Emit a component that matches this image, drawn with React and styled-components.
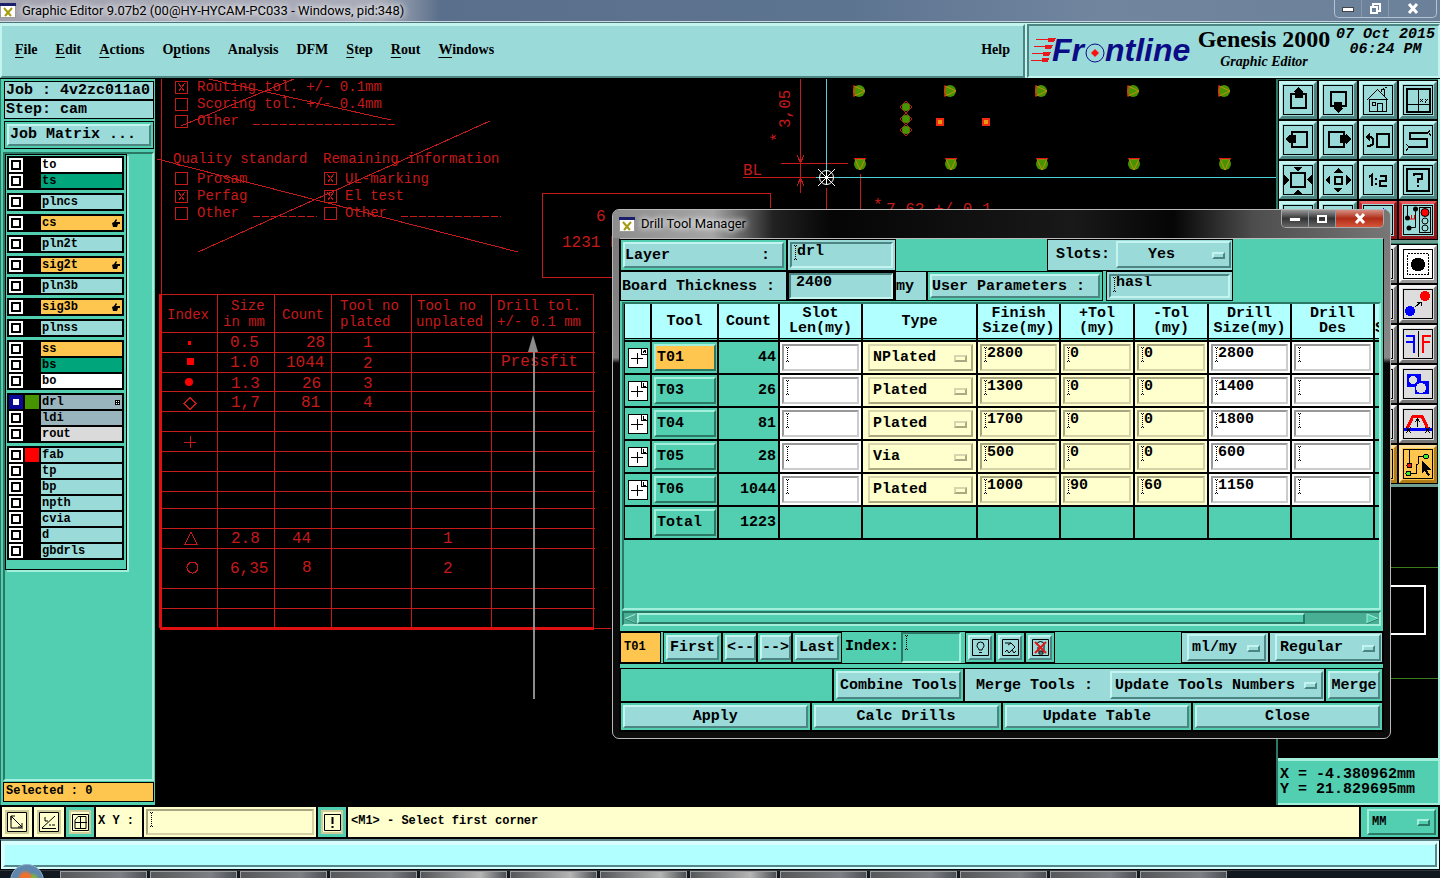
import styled, { createGlobalStyle, css } from 'styled-components';

const aqua = '#9adbda';
const teal = '#52cfb0';
const cream = '#feffcc';
const orange = '#ffc64f';
const mono = '"Liberation Mono", monospace';

const GlobalStyle = createGlobalStyle`
    *, *::before, *::after {
        box-sizing: border-box;
    }
    body {
        margin: 0;
        background: #000;
        color: #000;
        font: bold 15px ${mono};
    }
    button, input, select {
        font: inherit;
        color: inherit;
        margin: 0;
        border-radius: 0;
        outline: none;
    }
`

const raised = css`
    border: 2px solid;
    border-color: #c4f4f0 #4d8583 #4d8583 #c4f4f0;
`

const sunken = css`
    border: 2px solid;
    border-color: #4d8583 #c4f4f0 #c4f4f0 #4d8583;
`

const tealRaised = css`
    border: 2px solid;
    border-color: #a3efdc #2b7965 #2b7965 #a3efdc;
`

const tealSunken = css`
    border: 2px solid;
    border-color: #2b7965 #a3efdc #a3efdc #2b7965;
`

const Screen = styled.div`
    position: relative;
    display: flex;
    flex-direction: column;
    height: 100vh;
    min-height: 800px;
    overflow: hidden;
`

/* main window title */
const TitleBar = styled.header`
    display: flex;
    justify-content: space-between;
    align-items: center;
    height: 22px;
    padding: 0 3px 0 0;
    background: linear-gradient(90deg, #a3a3b0 0, #a9adb9 380px, #5a6f8b 440px, #5d7490 850px, #71859f 1100px, #6b8099 100%);
    border-bottom: 1px solid #c9d6df;
    font: 13px Roboto, sans-serif;
`

const TitleText = styled.div`
    display: flex;
    align-items: center;
    gap: 6px;
    text-shadow: 0 0 6px #fff, 0 0 6px #fff;
`

const WindowButtons = styled.div`
    display: flex;
    align-self: flex-start;
    height: 18px;
    border: 1px solid ${({ $dark }) => ($dark ? '#a9a9a9' : '#b5c3d2')};
    border-top: 0;
    border-radius: 0 0 5px 5px;
    overflow: hidden;
`

const WindowButton = styled.button`
    width: ${({ $wide }) => ($wide ? 47 : 27)}px;
    padding: 0;
    border: 0;
    border-right: 1px solid #8b99a8;
    display: flex;
    align-items: center;
    justify-content: center;
    background: ${({ $bg }) => $bg || 'transparent'};
    &:last-child {
        border-right: 0;
    }
`

/* menu + brand */
const Header = styled.div`
    display: flex;
    height: 56px;
    padding: 1px 0 0;
    gap: 2px;
    background: #c4f4f0;
    border-top: 1px solid #4f7478;
`

const MenuBar = styled.nav`
    flex: 1;
    display: flex;
    align-items: center;
    gap: 18px;
    padding: 0 13px 2px;
    background: ${aqua};
    ${raised}
    font: bold 14px "Liberation Serif", serif;
`

const MenuItem = styled.button`
    padding: 0;
    border: 0;
    background: none;
    &:last-child {
        margin-left: auto;
    }
    u {
        text-underline-offset: 3px;
    }
`

const Brand = styled.div`
    display: flex;
    width: 413px;
    padding-left: 2px;
    background: ${aqua};
    ${sunken}
`

const Product = styled.div`
    width: 138px;
    text-align: center;
    font: italic bold 14px/20px "Liberation Serif", serif;
    h1 {
        margin: 0;
        font: bold 24px/26px "Liberation Serif", serif;
        white-space: nowrap;
    }
`

const Clock = styled.div`
    flex: 1;
    padding-top: 1px;
    font: italic bold 15px/15px ${mono};
    text-align: center;
    white-space: nowrap;
`

const Main = styled.main`
    flex: 1;
    display: flex;
    min-height: 0;
    border-top: 1px solid #000;
`

/* left panel */
const Sidebar = styled.aside`
    display: flex;
    flex-direction: column;
    width: 155px;
    padding: 2px 1px 3px 2px;
    background: ${teal};
    border-left: 1px solid #2b7965;
`

const JobLine = styled.div`
    height: 19px;
    margin: 0 0 0 1px;
    padding-left: 1px;
    line-height: 17px;
    background: ${aqua};
    border: 1px solid #000;
    white-space: nowrap;
    overflow: hidden;
`

const ButtonWell = styled.div`
    margin: 2px 0 3px 1px;
    padding: 2px;
    border: 1px solid #000;
`

const MatrixButton = styled.button`
    display: block;
    width: 100%;
    height: 22px;
    padding: 0 1px;
    text-align: left;
    line-height: 16px;
    background: ${aqua};
    ${raised}
`

const LayerArea = styled.div`
    flex: 1;
    border: 2px solid;
    border-color: #2b7965 #a3efdc #a3efdc #2b7965;
`

const LayerPanel = styled.div`
    display: flex;
    flex-direction: column;
    gap: 3px;
    width: 122px;
    padding: 1px 1px 9px;
    border: 1px solid #000;
    box-shadow: 2px 2px 0 #a3efdc;
`

const LayerGroup = styled.div`
    display: flex;
    flex-direction: column;
    gap: 2px;
    width: 117px;
    padding: 2px;
    background: #000;
`

const LayerRow = styled.label`
    display: flex;
    gap: 2px;
    height: 14px;
    font-size: 12px;
    line-height: 13px;
`

const LayerCheck = styled.input`
    appearance: none;
    width: 14px;
    height: 14px;
    background: #000;
    border: 2px solid ${({ $active }) => ($active ? '#0a0a96' : '#fff')};
    box-shadow: inset 0 0 0 2px ${({ $active }) => ($active ? '#0a0a96' : '#000')}, inset 0 0 0 8px #fff;
`

const Swatch = styled.span`
    width: 14px;
    background: ${({ $color }) => $color || '#000'};
`

const LayerName = styled.span`
    flex: 1;
    display: flex;
    justify-content: space-between;
    align-items: center;
    padding: 0 2px 0 1px;
    background: ${({ $color }) => $color};
`

const Selected = styled.div`
    height: 20px;
    margin: 1px 0 0;
    padding-left: 2px;
    background: ${orange};
    border: 1px solid #000;
    font-size: 12px;
    line-height: 17px;
`

const Canvas = styled.div`
    flex: 1;
    min-width: 0;
    background: #000;
    svg {
        display: block;
        width: 100%;
        height: 100%;
    }
`

/* right panel */
const Tools = styled.aside`
    display: flex;
    flex-direction: column;
    width: 164px;
    border-left: 2px solid #2b7965;
    border-right: 2px solid #a3efdc;
`

const ToolGrid = styled.div`
    display: grid;
    grid-template-columns: repeat(4, 38px);
    gap: 2px;
    padding: 1px;
    border-top: 1px solid #2b7965;
    border-bottom: 3px solid #6f9e93;
`

const ToolButton = styled.button`
    display: flex;
    align-items: center;
    justify-content: center;
    height: 38px;
    padding: 0;
    background: ${({ $bg }) => $bg || aqua};
    border: 3px solid;
    border-color: ${({ $edge }) => $edge || '#c4f4f0 #4d8583 #4d8583 #c4f4f0'};
`

const Overview = styled.div`
    flex: 1;
    svg {
        display: block;
        width: 100%;
        height: 100%;
    }
`

const Coordinates = styled.output`
    display: block;
    height: 47px;
    padding: 6px 2px;
    background: ${teal};
    border-top: 3px solid #a3efdc;
    border-bottom: 2px solid #a3efdc;
    line-height: 15px;
    white-space: pre;
`

/* bottom bars */
const StatusBar = styled.div`
    display: flex;
    height: 34px;
    padding: 2px;
    gap: 2px;
    background: #000;
    font-size: 12px;
`

const StatusButton = styled.button`
    width: ${({ $framed }) => ($framed ? 28 : 30)}px;
    display: flex;
    align-items: center;
    justify-content: center;
    padding: 0;
    background: ${cream};
    border: ${({ $framed }) => ($framed ? `3px solid ${teal}` : `3px solid ${cream}`)};
    box-shadow: inset 0 0 0 2px #cfcd9c;
`

const XyLabel = styled.label`
    width: 46px;
    padding-left: 2px;
    background: ${cream};
    line-height: 29px;
`

const XyField = styled.div`
    position: relative;
    width: 172px;
    padding: 2px;
    background: ${cream};
`

const Message = styled.div`
    flex: 1;
    padding-left: 3px;
    background: ${cream};
    line-height: 29px;
`

const UnitCell = styled.div`
    width: 77px;
    padding: 2px 2px 2px 6px;
    background: ${teal};
`

const PromptBar = styled.div`
    height: 31px;
    padding: 2px;
    background: #d8ffff;
    border: 1px solid #000;
    border-top: 2px solid #5e8587;
    div {
        height: 100%;
        background: #b2ffff;
        border: 2px solid;
        border-color: #d8ffff #558788 #558788 #d8ffff;
    }
`

const Taskbar = styled.footer`
    position: relative;
    display: flex;
    gap: 3px;
    height: 8px;
    padding-left: 60px;
    background: #12181f;
    border-top: 1px solid #33383f;
`

const Task = styled.div`
    width: 87px;
    border: 1px solid #a0a0a0;
    border-bottom: 0;
    background: linear-gradient(90deg, #55575a, ${({ $lit }) => ($lit ? '#b5b5b5' : '#7c7f83')} 70%, #4c4f53);
`

const StartOrb = styled.button`
    position: absolute;
    left: 10px;
    top: -7px;
    width: 34px;
    height: 34px;
    border: 1px solid #8fb0c8;
    border-radius: 50%;
    background: radial-gradient(circle at 45% 40%, #f0702c 0 4px, transparent 8px), radial-gradient(circle at 68% 45%, #7fb63c 0 3px, transparent 7px), #5f87ad;
`

/* drill tool manager window */
const Dialog = styled.section`
    position: absolute;
    left: 612px;
    top: 209px;
    width: 779px;
    padding: 0 6px 6px;
    border: 1px solid #b9b9b9;
    border-radius: 7px;
    background: linear-gradient(180deg, #777 0, #888 28%, #080808 29%, #0c0c0c 100%);
`

const DialogTitle = styled.div`
    display: flex;
    justify-content: space-between;
    height: 28px;
    margin: 0 -6px;
    padding: 0 6px;
    border-radius: 6px 6px 0 0;
    background: linear-gradient(90deg, #8d8d8d 0, #a6a6a6 100px, #222 160px, #050505 220px, #191919 460px, #050505 560px, #4d4d4d 640px, #777 100%);
    font: 13px/26px Roboto, sans-serif;
`

const Client = styled.div`
    background: ${teal};
    border: 1px solid #000;
    border-top-color: #bbb;
`

const FormRow = styled.div`
    display: flex;
    height: ${({ $h }) => $h || 32}px;
`

const Cell = styled.div`
    position: relative;
    display: flex;
    align-items: center;
    gap: ${({ $gap }) => $gap || 0}px;
    width: ${({ $w }) => ($w ? `${$w}px` : 'auto')};
    flex: ${({ $grow }) => ($grow ? 1 : 'none')};
    padding: ${({ $pad }) => $pad || '2px'};
    background: ${({ $bg }) => $bg || teal};
    border: 1px solid #000;
    white-space: nowrap;
`

const Spacer = styled.div`
    flex: ${({ $w }) => ($w ? 'none' : 1)};
    width: ${({ $w }) => $w || 0}px;
`

const Button = styled.button`
    flex: 1;
    align-self: stretch;
    display: flex;
    align-items: center;
    justify-content: ${({ $between }) => ($between ? 'space-between' : 'center')};
    padding: 0 ${({ $between }) => ($between ? '12px 0 0' : '0')};
    background: ${aqua};
    white-space: nowrap;
    ${raised}
`

const FieldBox = styled.div`
    position: relative;
    flex: ${({ $w }) => ($w ? `0 0 ${$w}px` : 1)};
    align-self: stretch;
    display: flex;
    svg {
        position: absolute;
        left: 3px;
        top: 3px;
        pointer-events: none;
    }
`

const Input = styled.input`
    width: 100%;
    height: 100%;
    padding: 0 0 8px 5px;
    background: ${({ $bg }) => $bg || aqua};
    border: 2px solid;
    border-color: ${({ $edge }) => $edge || '#4d8583 #c4f4f0 #c4f4f0 #4d8583'};
`

const SelectBox = styled.div`
    position: relative;
    flex: 1;
    height: 100%;
    &::after {
        content: '';
        position: absolute;
        right: 6px;
        top: calc(50% - 3px);
        width: 13px;
        height: 7px;
        border: 2px solid;
        border-color: ${({ $mark }) => $mark || '#c4f4f0 #4d8583 #4d8583 #c4f4f0'};
        pointer-events: none;
    }
`

const Select = styled.select`
    appearance: none;
    width: 100%;
    height: 100%;
    padding: 0 0 0 ${({ $left }) => $left || 3}px;
    background: ${({ $bg }) => $bg || aqua};
    border: 2px solid;
    border-color: ${({ $edge }) => $edge || '#c4f4f0 #4d8583 #4d8583 #c4f4f0'};
`

const TableArea = styled.div`
    height: 308px;
    margin: 1px 2px 0;
    overflow: hidden;
    ${tealSunken}
`

const DrillGrid = styled.table`
    table-layout: fixed;
    width: 832px;
    border-collapse: separate;
    border-spacing: 0;
    border-left: 1px solid #000;
    th, td {
        padding: 2px;
        border-right: 2px solid #000;
        border-bottom: 2px solid #000;
        overflow: hidden;
    }
    th {
        height: 38px;
        padding: 0 0 2px;
        background: linear-gradient(#b2ffff 34px, #000 34px 35px, ${teal} 35px);
        line-height: 15px;
    }
    td {
        height: 33px;
    }
    th:last-child {
        text-align: left;
    }
`

const DataCell = styled.td`
    background: ${({ $bg }) => $bg || teal};
    text-align: ${({ $right }) => ($right ? 'right' : 'left')};
    && {
        padding: ${({ $type }) => ($type ? '2px 3px 2px 5px' : '2px')};
    }
    > div {
        height: 27px;
    }
`

const ToolName = styled.button`
    display: block;
    width: 62px;
    height: 27px;
    padding: 0 1px;
    text-align: left;
    background: ${({ $on }) => ($on ? orange : teal)};
    ${tealRaised}
`

const ExpandButton = styled.button`
    display: block;
    padding: 0;
    margin: 0 auto;
    border: 0;
    background: #fff;
    svg {
        display: block;
    }
`

const Scroller = styled.div`
    display: flex;
    align-items: center;
    height: 15px;
    margin: 1px 2px 5px;
    background: #48ae94;
    ${tealSunken}
`

const Thumb = styled.div`
    width: 668px;
    height: 11px;
    margin-right: auto;
    background: ${teal};
    ${tealRaised}
`

const Arrow = styled.button`
    display: flex;
    padding: 0;
    border: 0;
    background: none;
`

const NavRow = styled(FormRow)`
    border-top: 1px solid #000;
    border-bottom: 1px solid #000;
    margin-bottom: 4px;
`

const CurrentTool = styled.div`
    width: 41px;
    padding-left: 3px;
    background: ${orange};
    border: 1px solid #000;
    font-size: 12px;
    line-height: 28px;
`

const IndexLabel = styled.label`
    width: 59px;
    padding-left: 3px;
    line-height: 30px;
`

const creamEdge = '#a9a782 #d4d2a6 #d4d2a6 #a9a782';
const creamRaise = '#d8d6ae #aaa982 #aaa982 #d8d6ae';
const whiteEdge = '#999 #ccc #ccc #999';
const tealEdge = '#2b7965 #a3efdc #a3efdc #2b7965';
const tealUp = '#a3efdc #2b7965 #2b7965 #a3efdc';
const greyEdge = '#f4f4f4 #777 #777 #f4f4f4';

const menus = [
    ['', 'F', 'ile'], ['', 'E', 'dit'], ['', 'A', 'ctions'], ['O', 'p', 'tions'], ['Analysis', '', ''],
    ['DFM', '', ''], ['', 'S', 'tep'], ['', 'R', 'out'], ['', 'W', 'indows'], ['Help', '', ''],
];

const green = '#00a57c';
const layerGroups = [
    [{ name: 'to', color: '#fff' }, { name: 'ts', color: green }],
    [{ name: 'plncs', color: aqua }],
    [{ name: 'cs', color: orange, hand: true }],
    [{ name: 'pln2t', color: aqua }],
    [{ name: 'sig2t', color: orange, hand: true }],
    [{ name: 'pln3b', color: aqua }],
    [{ name: 'sig3b', color: orange, hand: true }],
    [{ name: 'plnss', color: aqua }],
    [{ name: 'ss', color: orange }, { name: 'bs', color: green }, { name: 'bo', color: '#fff' }],
    [{ name: 'drl', color: '#9ab4bd', swatch: '#459400', active: true }, { name: 'ldi', color: '#9ab4bd' }, { name: 'rout', color: '#dadada' }],
    [{ name: 'fab', color: aqua, swatch: '#f00' }, { name: 'tp', color: aqua }, { name: 'bp', color: aqua },
        { name: 'npth', color: aqua }, { name: 'cvia', color: aqua }, { name: 'd', color: aqua }, { name: 'gbdrls', color: aqua }],
];

const drills = [
    { tool: 'T01', mark: 'A', count: 44, type: 'NPlated', finish: 2800, plus: 0, minus: 0, size: 2800 },
    { tool: 'T03', mark: 'C', count: 26, type: 'Plated', finish: 1300, plus: 0, minus: 0, size: 1400 },
    { tool: 'T04', mark: 'D', count: 81, type: 'Plated', finish: 1700, plus: 0, minus: 0, size: 1800 },
    { tool: 'T05', mark: 'E', count: 28, type: 'Via', finish: 500, plus: 0, minus: 0, size: 600 },
    { tool: 'T06', mark: 'F', count: 1044, type: 'Plated', finish: 1000, plus: 90, minus: 60, size: 1150 },
];

const columns = [27, 67, 61, 83, 115, 83, 74, 74, 83, 83, 83];

function Icon({ children, ...props }) {
    return (
        <svg width="30" height="30" viewBox="0 0 30 30" fill="none" stroke="#000" shapeRendering="crispEdges" {...props}>
            <rect x="0.5" y="0.5" width="29" height="29" />
            {children}
        </svg>
    )
}

const viewIcons = [
    { name: 'Pan up', art: <><rect x="8" y="9" width="15" height="14" strokeWidth="2" /><path d="M15.500 2l5 5h-1v6h-8v-6h-1z" fill="#000" stroke="none" /></> },
    { name: 'Pan down', art: <><rect x="8" y="7" width="15" height="14" strokeWidth="2" /><path d="M15 28l5-5h-1v-6h-8v6h-1z" fill="#000" stroke="none" /></> },
    { name: 'Home', art: <><path d="M4 15L14.500 4.500 25 15M6.500 14.500h17v12h-17zM14.500 26v-8h5v8M9.500 17.500h3v3h-3zM18.500 7V4.500h3V11M20.500 4V2.500M22 2h2" /></> },
    { name: 'Grid', art: <><rect x="3.500" y="3.500" width="23" height="23" strokeWidth="2" /><path d="M15.500 4v23M4 19.500h23M17 14l3 3M20 14l-3 3M22 14l1.500 1.500M25 14l-3 3.500" /></> },
    { name: 'Pan left', art: <><rect x="9" y="7" width="15" height="15" strokeWidth="2" /><path d="M2 14l5-5v1h6v8h-6v1z" fill="#000" stroke="none" /></> },
    { name: 'Pan right', art: <><rect x="6" y="7" width="15" height="15" strokeWidth="2" /><path d="M28 14l-5-5v1h-6v8h6v1z" fill="#000" stroke="none" /></> },
    { name: 'Previous view', art: <><rect x="14" y="9" width="12" height="13" strokeWidth="2" /><path d="M4 12h4l2 2v5l-3 2H4" strokeWidth="2" /><path d="M2 12l5-5v9z" fill="#000" stroke="none" /></> },
    { name: 'Snake', art: <><path d="M25 8H7v6h17v8H6" strokeWidth="2" /><path d="M25 8l2-3M26 8l2 3M6 22l-3-3M6 22l-3 4" /></> },
    { name: 'Zoom in', art: <><rect x="8" y="8" width="14" height="14" strokeWidth="2" /><path d="M10 2h10l-5 4zM10 29h10l-5-4zM1 9l5 6-5 5zM29 9l-5 6 5 5z" fill="#000" stroke="none" /></> },
    { name: 'Zoom out', art: <><rect x="12" y="12" width="7" height="7" strokeWidth="2" /><path d="M10 8h10l-5-5zM10 23h10l-5 4zM7 10v10l-5-5zM23 10v10l5-5z" fill="#000" stroke="none" /></> },
    { name: 'Zoom ratio', art: <path d="M6 12l3-2v11M13 13v2M13 18v2M17 11h6v5h-6v5h7" strokeWidth="2" /> },
    { name: 'Help', art: <><rect x="4" y="4" width="22" height="22" strokeWidth="2" /><path d="M11 11V9h8v5h-4v4M15 20v2" strokeWidth="2" /></> },
];

const red = '#e9585a #8e1519 #8e1519 #c52127';
const modeIcons = [
    { name: 'Select area', art: <path d="M16 6h7v4h-7z" fill="#000" /> },
    { name: 'Select net', art: <path d="M6 6h20" /> },
    { name: 'Snap', edge: red, art: <path d="M5 5h9M20 3l6 5" stroke="#00f" /> },
    {
        name: 'Stop and go', edge: red,
        art: <g shapeRendering="auto"><path d="M4.500 1v12M12.500 4v18.500H6" /><g fill="#000" stroke="none"><circle cx="4.500" cy="13" r="2.500" /><circle cx="12.500" cy="4" r="2.500" /><circle cx="6" cy="23" r="2.500" /></g><path d="M7 14h5M8.500 14v-4M11.500 14v-4" stroke="#e00" /><rect x="16.500" y="2.500" width="11" height="25" /><circle cx="22" cy="7.500" r="4" fill="#f00" /><circle cx="22" cy="16" r="3" /><circle cx="22" cy="23" r="3" /></g>,
    },
];

const editIcons = [
    { name: 'Single feature', bg: '#fff', edge: '#fff #999 #999 #fff', art: <><rect x="4.500" y="4.500" width="21" height="21" strokeDasharray="2 1" /><circle cx="15" cy="15.500" r="7" fill="#000" stroke="none" /></> },
    { name: 'Move', art: <><circle cx="22" cy="7" r="5" fill="#f00" stroke="none" /><circle cx="7" cy="22" r="5" fill="#00f" stroke="none" /><path d="M12 18l6-5M14 13h4v4" /></> },
    { name: 'Mirror', art: <><path d="M3 7h8v17M3 13h8" stroke="#00f" strokeWidth="2" /><path d="M15.500 2v26" /><path d="M28 7h-8v17M20 13h7" stroke="#f00" strokeWidth="2" /></> },
    { name: 'Shapes', art: <><path d="M4 5h14v7h8v13H12v-7H4z" fill="#00f" stroke="none" /><circle cx="10" cy="11" r="4" fill="#ddd" stroke="none" /><circle cx="18" cy="19" r="5" fill="#ddd" stroke="none" /></> },
    { name: 'Stretch', art: <><path d="M4 20l6-13h9l6 13" stroke="#f00" strokeWidth="3" /><path d="M1 20.500h28" stroke="#00f" strokeWidth="3" /><path d="M14.500 18v-7M12 13l2.500-3 2.500 3M3 18l5 6M8 18l-5 6M22 18l5 6M27 18l-5 6" /></> },
    { name: 'Edit route', bg: orange, edge: '#ffe09a #b07d18 #b07d18 #ffe09a', art: <><path d="M6.500 1v14M6 24.500h7V16l2-1V7.500h7" /><circle cx="6.500" cy="16.500" r="2.500" fill="#e11" /><circle cx="5.500" cy="24.500" r="2.500" fill="#3e3" /><circle cx="23" cy="7.500" r="2.500" fill="#3e3" /><path d="M19 12v12l3-2 3 5 2-1-3-5h4z" fill="#000" stroke="none" /></> },
];

function XIcon() {
    return (
        <svg width="16" height="15" viewBox="0 0 16 15" aria-hidden="true">
            <rect x="0.500" y="0.500" width="15" height="14" fill="#fff" stroke="#9a9a9a" />
            <rect width="16" height="3" fill="#1b1e6b" />
            <path d="M4 5l7 8M12 5l-7 8" stroke="#a59b12" strokeWidth="2" />
        </svg>
    )
}

function Caret() {
    return (
        <svg width="5" height="15" viewBox="0 0 5 15" shapeRendering="crispEdges" aria-hidden="true">
            <path d="M2.500 1v13" stroke="#000" strokeDasharray="1 1" />
            <path d="M1 .5h1M3 .5h1M1 14.500h1M3 14.500h1" stroke="#000" />
        </svg>
    )
}

function Field({ id, label, caret = true, ...props }) {
    return (
        <FieldBox>
            <Input id={id} aria-label={label} {...props} />
            {caret && <Caret />}
        </FieldBox>
    )
}

function Dropdown({ label, options, mark, ...props }) {
    return (
        <SelectBox $mark={mark}>
            <Select aria-label={label} {...props}>
                {options.map((o) => <option key={o}>{o}</option>)}
            </Select>
        </SelectBox>
    )
}

function Controls({ dark }) {
    return (
        <WindowButtons $dark={dark}>
            <WindowButton aria-label="Minimize" $bg={dark && 'linear-gradient(#999, #333 50%, #666)'}>
                <svg width="12" height="6"><rect x="0.500" y="1.500" width="11" height="4" fill="#fff" stroke="#444" /></svg>
            </WindowButton>
            <WindowButton aria-label="Restore" $bg={dark && 'linear-gradient(#999, #333 50%, #666)'}>
                <svg width="12" height="12" fill="none" stroke="#fff" strokeWidth="2">
                    {dark ? <rect x="2" y="3" width="8" height="6" /> : <path d="M4 3V1h7v7H9M2 4h6v6H2z" />}
                </svg>
            </WindowButton>
            <WindowButton aria-label="Close" $wide $bg={dark && 'linear-gradient(#d59084, #b02c17 50%, #d4553a)'}>
                <svg width="12" height="11" stroke="#fff" strokeWidth="3"><path d="M2 1l8 9M10 1l-8 9" /></svg>
            </WindowButton>
        </WindowButtons>
    )
}

function Logo() {
    return (
        <svg width="164" height="50" viewBox="0 0 164 50" aria-label="Frontline">
            <g stroke="#e8181c" fill="#e8181c" shapeRendering="crispEdges">
                <path d="M5 13.500h14M3 20.500h13M1 27.500h13M0 34.500h13" fill="none" />
                <path d="M17 12h8l-2 4h-6zM14 19h8l-2 4h-6zM12 26h8l-2 4h-6zM11 32h7l-1 4h-6z" stroke="none" />
            </g>
            <g fill="#0b0b86" fontFamily="Liberation Sans, sans-serif" fontWeight="bold" fontStyle="italic" fontSize="32">
                <text x="21" y="35">Fr</text>
                <text x="74" y="35">ntline</text>
            </g>
            <circle cx="64" cy="27" r="9" fill={aqua} stroke="#0b0b86" />
            <path d="M64 23l4 4-4 4-4-4z" fill="#f11" />
        </svg>
    )
}

// fabrication drawing
const rowLines = [332, 352, 372, 391, 411, 431, 451, 471, 491, 508, 528, 548, 588, 608];
const colLines = [217, 274, 331, 411, 491, 593];

const notes = [
    [197, 91, 'Routing tol. +/- 0.1mm'], [197, 108, 'Scoring tol. +/- 0.4mm'], [197, 125, 'Other'],
    [173, 163, 'Quality standard'], [323, 163, 'Remaining information'],
    [197, 183, 'Prosam'], [197, 200, 'Perfag'], [197, 217, 'Other'],
    [345, 183, 'UL-marking'], [345, 200, 'El test'], [345, 217, 'Other'],
    [167, 319, 'Index'], [231, 310, 'Size'], [223, 326, 'in mm'], [282, 319, 'Count'],
    [340, 310, 'Tool no'], [340, 326, 'plated'], [417, 310, 'Tool no'], [416, 326, 'unplated'],
    [497, 310, 'Drill tol.'], [497, 326, '+/- 0.1 mm'],
];

const values = [
    [230, 347, '0.5'], [306, 347, '28'], [363, 347, '1'],
    [230, 367, '1.0'], [286, 367, '1044'], [363, 368, '2'], [501, 366, 'Pressfit'],
    [231, 388, '1.3'], [302, 388, '26'], [363, 388, '3'],
    [231, 407, '1,7'], [301, 407, '81'], [363, 407, '4'],
    [231, 543, '2.8'], [292, 543, '44'], [443, 543, '1'],
    [230, 573, '6,35'], [302, 572, '8'], [443, 573, '2'],
    [596, 221, '6'], [562, 247, '1231 H'], [743, 175, 'BL'], [873, 210, '*'], [886, 214, '7,62 +/-0,1'],
];

const boxes = [[175, 81, 1], [175, 98], [175, 115], [175, 172], [175, 190, 1], [175, 207], [324, 172, 1], [324, 190, 1], [324, 207]];

function Drawing() {
    return (
        <svg role="img" aria-label="Board drawing">
            <g transform="translate(-155 -79)">
                <g stroke="#c51a1a" fill="none" shapeRendering="crispEdges">
                    <path d="M161.500 79v215M209 79L391 120M294 79L181 126M157 159L518 252M490 121L198 252" />
                    <path d="M253 124.500h144M253 216.500h64M401 216.500h100" strokeDasharray="7 2" />
                    {boxes.map(([x, y, on]) => (
                        <path key={`${x}-${y}`} d={`M${x}.5 ${y}.500h12v12h-12z${on ? 'm3 2l6 8m0-8l-6 8' : ''}`} />
                    ))}
                    <path d="M770.500 208v-14.500H542.500v84H615" />
                    {rowLines.map((y) => <path key={y} d={`M161 ${y}.500H595`} />)}
                    {colLines.map((x) => <path key={x} d={`M${x}.500 294v334`} />)}
                    <path d="M160 294.500h434M594 628.500h17" />
                    <path d="M160.500 294v334M160 628h434" stroke="#e01010" strokeWidth="3" />
                    <path d="M190 397.500l6 6-6 6-6-6zM184 442.500h12M190.500 436v12M191 532l6 12h-12z" />
                    <circle cx="192.500" cy="567.500" r="5.500" />
                    <path d="M800.500 79v114M781 163.500h67M743 177.500h74M826.500 188v21M860.500 174v35M797 155l3.500 8 3.500-8M797 186l3.500-8 3.500 8" />
                </g>
                <g fill="#f00">
                    <rect x="188" y="341" width="3" height="4" />
                    <rect x="187" y="358" width="7" height="7" />
                    <circle cx="189" cy="382" r="4" />
                </g>
                <g fill="#c51a1a" fontFamily="Liberation Mono, monospace" fontWeight="normal">
                    <g fontSize="14">{notes.map(([x, y, t]) => <text key={`${x}-${y}`} x={x} y={y}>{t}</text>)}</g>
                    <g fontSize="16">
                        {values.map(([x, y, t]) => <text key={`${x}-${y}`} x={x} y={y}>{t}</text>)}
                        <text transform="translate(790 128) rotate(-90)">3,05</text>
                        <text transform="translate(782 142) rotate(-90)">*</text>
                    </g>
                </g>
                <path d="M534 352v347" stroke="#8c8c8c" strokeWidth="2" />
                <path d="M533 335l5 17h-10z" fill="#8c8c8c" />
                {[859, 950, 1041, 1133, 1224].map((x) => (
                    <g key={x} stroke="#c58a10" fill="none">
                        <circle cx={x} cy="91" r="6" fill="#459400" stroke="none" />
                        <path d={`M${x - 5} 86v10l11-5z`} />
                        <path d={`M${x - 5} 85v12`} stroke="#e11" />
                        <circle cx={x + 1} cy="164" r="6" fill="#459400" stroke="none" />
                        <path d={`M${x - 4} 159h10l-5 11z`} />
                        <path d={`M${x - 5} 158.500h12`} stroke="#e11" />
                    </g>
                ))}
                {[107, 119, 130].map((y) => (
                    <g key={y}>
                        <path d={`M906 ${y - 6}l6 6-6 6-6-6z`} fill="none" stroke="#c51a1a" />
                        <circle cx="906" cy={y} r="4" fill="#459400" />
                    </g>
                ))}
                <g fill="#e79a10" stroke="#f02a10" strokeWidth="2">
                    <rect x="937" y="119" width="6" height="6" />
                    <rect x="983" y="119" width="6" height="6" />
                </g>
                <path d="M826.500 79v99M816 177.500h460" stroke="#4fd0d6" shapeRendering="crispEdges" />
                <g stroke="#fff" fill="none">
                    <circle cx="826.500" cy="177.500" r="7" />
                    <path d="M818 169l17 17M835 169l-17 17M819 177.500h15M826.500 170v15" />
                </g>
            </g>
        </svg>
    )
}

function DrillRow({ row, first }) {
    return (
        <tr>
            <DataCell>
                <ExpandButton aria-label={`Expand ${row.tool}`}>
                    <svg width="20" height="20" viewBox="0 0 20 20" fill="none" stroke="#000" shapeRendering="crispEdges">
                        <path d="M.5 .500h19v19H.5zM3 10.500h12M9.500 5v11M13 .500v6h6" />
                        <path d={row.mark === 'A' ? 'M15 5l2-3 1 3' : 'M15.500 2v3h2'} />
                    </svg>
                </ExpandButton>
            </DataCell>
            <DataCell><ToolName $on={first}>{row.tool}</ToolName></DataCell>
            <DataCell $right>{row.count}</DataCell>
            <DataCell $bg="#fff"><Field label="Slot length" $bg="#fff" $edge={whiteEdge} /></DataCell>
            <DataCell $bg={cream} $type>
                <div>
                    <Dropdown label="Type" options={[row.type]} $bg={cream} $edge={creamRaise} mark={creamRaise} />
                </div>
            </DataCell>
            {['finish', 'plus', 'minus'].map((key) => (
                <DataCell key={key} $bg={cream}>
                    <Field label={key} defaultValue={row[key]} $bg={cream} $edge={creamEdge} />
                </DataCell>
            ))}
            <DataCell $bg="#fff"><Field label="Drill size" defaultValue={row.size} $bg="#fff" $edge={whiteEdge} /></DataCell>
            <DataCell $bg="#fff"><Field label="Designation" $bg="#fff" $edge={whiteEdge} /></DataCell>
            <DataCell />
        </tr>
    )
}

function DrillToolManager() {
    return (
        <Dialog aria-label="Drill Tool Manager">
            <DialogTitle>
                <TitleText><XIcon />Drill Tool Manager</TitleText>
                <Controls dark />
            </DialogTitle>
            <Client>
                <FormRow $h={32}>
                    <Cell $w={167}><Button $between><span>Layer</span><span>:</span></Button></Cell>
                    <Cell $w={109} $bg={aqua}><Field label="Layer" defaultValue="drl" /></Cell>
                    <Spacer $w={151} />
                    <Cell $w={186} $bg={aqua} $pad="1px 1px 2px 8px" $gap={6}>
                        Slots:
                        <Dropdown label="Slots" options={['Yes']} $left={30} />
                    </Cell>
                </FormRow>
                <FormRow $h={30}>
                    <Cell $w={167} $bg={aqua} $pad="0 0 0 1px"><label htmlFor="thickness">Board Thickness :</label></Cell>
                    <Cell $w={108} $bg="#000" $pad="1px"><Field id="thickness" defaultValue="2400" caret={false} /></Cell>
                    <Cell $w={32} $bg={aqua} $pad="0">my</Cell>
                    <Cell $w={176}><Button $between>User Parameters :</Button></Cell>
                    <Spacer $w={3} />
                    <Cell $w={127} $bg={aqua}><Field label="User parameters" defaultValue="hasl" /></Cell>
                </FormRow>
                <TableArea>
                    <DrillGrid>
                        <colgroup>{columns.map((w, i) => <col key={i} style={{ width: w }} />)}</colgroup>
                        <thead>
                            <tr>
                                <th /><th>Tool</th><th>Count</th><th>Slot<br />Len(my)</th><th>Type</th>
                                <th>Finish<br />Size(my)</th><th>+Tol<br />(my)</th><th>-Tol<br />(my)</th>
                                <th>Drill<br />Size(my)</th><th>Drill<br />Des</th><th><br />Size</th>
                            </tr>
                        </thead>
                        <tbody>
                            {drills.map((row, i) => <DrillRow key={row.tool} row={row} first={i === 0} />)}
                            <tr>
                                <DataCell />
                                <DataCell><ToolName>Total</ToolName></DataCell>
                                <DataCell $right>1223</DataCell>
                                {columns.slice(3).map((w, i) => <DataCell key={i} />)}
                            </tr>
                        </tbody>
                    </DrillGrid>
                </TableArea>
                <Scroller>
                    <Arrow aria-label="Scroll left">
                        <svg width="13" height="11"><path d="M12 1L1 5.500l11 4.500z" fill="#48ae94" stroke="#a3efdc" /><path d="M1 6l11 4.500V1" fill="none" stroke="#2b7965" /></svg>
                    </Arrow>
                    <Thumb />
                    <Arrow aria-label="Scroll right">
                        <svg width="13" height="11"><path d="M1 1l11 4.500L1 10z" fill={teal} stroke="#a3efdc" /><path d="M12 6L1 10.500" stroke="#2b7965" /></svg>
                    </Arrow>
                </Scroller>
                <NavRow $h={33}>
                    <CurrentTool>T01</CurrentTool>
                    <Spacer $w={2} />
                    <Cell $w={59}><Button>First</Button></Cell>
                    <Cell $w={35}><Button>&lt;--</Button></Cell>
                    <Cell $w={35}><Button>--&gt;</Button></Cell>
                    <Cell $w={50}><Button>Last</Button></Cell>
                    <IndexLabel htmlFor="index">Index:</IndexLabel>
                    <FieldBox $w={60}><Input id="index" $bg={teal} $edge={tealEdge} /><Caret /></FieldBox>
                    <Spacer $w={4} />
                    <Cell $w={30}><Button aria-label="Highlight">
                        <svg width="17" height="17" fill="none" stroke="#000"><path d="M.5.5h16v16H.5zM7 11c0-2-2-2-2-4.500a3.500 3.500 0 0 1 7 0c0 2.500-2 2.500-2 4.500zM7 13.500h3" /></svg>
                    </Button></Cell>
                    <Cell $w={30}><Button aria-label="Rout path">
                        <svg width="17" height="17" fill="none" stroke="#000"><path d="M.5.5h16v16H.5zM3 4h6l4 4-3 3M9 4L6 6M3 13l2-2 2 3 3-3 2 3 2-2" /></svg>
                    </Button></Cell>
                    <Cell $w={30}><Button aria-label="Clear highlight">
                        <svg width="17" height="17" fill="none" stroke="#000"><path d="M.5.5h16v16H.5zM5 6a3.500 3.500 0 0 1 7 0v6H6V8M7 13h4v2H7z" /><path d="M3 3l11 11M14 3L3 14" stroke="#e01818" strokeWidth="2" /></svg>
                    </Button></Cell>
                    <Spacer />
                    <Cell $w={88} $bg={aqua} $pad="1px 2px 1px 5px"><Dropdown label="Units" options={['ml/my']} /></Cell>
                    <Cell $w={114} $bg={aqua} $pad="1px 1px 1px 5px"><Dropdown label="Mode" options={['Regular']} /></Cell>
                </NavRow>
                <FormRow $h={34}>
                    <Cell $grow />
                    <Cell $w={131}><Button>Combine Tools</Button></Cell>
                    <Cell $w={361} $bg={aqua} $pad="2px 1px 2px 11px" $gap={17}>
                        Merge Tools :
                        <Dropdown label="Merge tools" options={['Update Tools Numbers']} />
                    </Cell>
                    <Cell $w={58}><Button>Merge</Button></Cell>
                </FormRow>
                <FormRow $h={29}>
                    {['Apply', 'Calc Drills', 'Update Table', 'Close'].map((t) => (
                        <Cell key={t} $grow><Button>{t}</Button></Cell>
                    ))}
                </FormRow>
            </Client>
        </Dialog>
    )
}

export default function App() {
    return (
        <Screen>
            <GlobalStyle />
            <TitleBar>
                <TitleText><XIcon />Graphic Editor 9.07b2 (00@HY-HYCAM-PC033 - Windows, pid:348)</TitleText>
                <Controls />
            </TitleBar>
            <Header>
                <MenuBar>
                    {menus.map(([a, key, b]) => <MenuItem key={a + key + b}>{a}{key && <u>{key}</u>}{b}</MenuItem>)}
                </MenuBar>
                <Brand>
                    <Logo />
                    <Product><h1>Genesis 2000</h1>Graphic Editor</Product>
                    <Clock>07 Oct 2015<br />06:24 PM</Clock>
                </Brand>
            </Header>
            <Main>
                <Sidebar>
                    <JobLine>Job : 4v2zc011a0</JobLine>
                    <JobLine>Step: cam</JobLine>
                    <ButtonWell><MatrixButton>Job Matrix ...</MatrixButton></ButtonWell>
                    <LayerArea>
                        <LayerPanel>
                            {layerGroups.map((group) => (
                                <LayerGroup key={group[0].name}>
                                    {group.map((layer) => (
                                        <LayerRow key={layer.name}>
                                            <LayerCheck type="checkbox" $active={layer.active} />
                                            <Swatch $color={layer.swatch} />
                                            <LayerName $color={layer.color}>
                                                {layer.name}
                                                {layer.hand && <svg width="8" height="8"><path d="M0 4l2-1 2-3 1 1-1 2h4v2H6l-1 3H1z" /></svg>}
                                                {layer.active && <svg width="5" height="5" viewBox="0 0 5 5" shapeRendering="crispEdges"><path d="M0 0h5v5H0z" /><path d="M1 1h1v1H1zM3 1h1v1H3zM1 3h1v1H1zM3 3h1v1H3z" fill="#fff" /></svg>}
                                            </LayerName>
                                        </LayerRow>
                                    ))}
                                </LayerGroup>
                            ))}
                        </LayerPanel>
                    </LayerArea>
                    <Selected>Selected : 0</Selected>
                </Sidebar>
                <Canvas><Drawing /></Canvas>
                <Tools>
                    <ToolGrid>
                        {[...viewIcons, ...modeIcons].map((t) => (
                            <ToolButton key={t.name} aria-label={t.name} $edge={t.edge}><Icon>{t.art}</Icon></ToolButton>
                        ))}
                    </ToolGrid>
                    <ToolGrid>
                        {editIcons.map((t) => [1, 2, 3, 4].map((n) => {
                            const plain = n < 4 && t.bg !== orange;
                            return (
                                <ToolButton
                                    key={t.name + n}
                                    aria-label={n === 4 ? t.name : `${t.name} ${n}`}
                                    $bg={plain ? '#ddd' : t.bg || '#ddd'}
                                    $edge={plain ? greyEdge : t.edge || greyEdge}
                                >
                                    <Icon>{n === 4 && t.art}</Icon>
                                </ToolButton>
                            )
                        }))}
                    </ToolGrid>
                    <Overview>
                        <svg role="img" aria-label="Overview" fill="none">
                            <path d="M0 80.500h162M0 191.500h162" stroke="#3c7a1c" />
                            <rect x="12" y="99" width="135" height="48" stroke="#fff" strokeWidth="2" />
                        </svg>
                    </Overview>
                    <Coordinates>{'X = -4.380962mm\nY = 21.829695mm'}</Coordinates>
                </Tools>
            </Main>
            <StatusBar>
                <StatusButton aria-label="Measure">
                    <svg width="20" height="20" fill="none" stroke="#000"><path d="M.5.5h19v19H.5zM4 4v12h12M4 4l11 11M4 8V4h4M15 11v4h-4" /></svg>
                </StatusButton>
                <StatusButton aria-label="Angle">
                    <svg width="20" height="20" fill="none" stroke="#000"><path d="M.5.5h19v19H.5zM3 16.500h14M3 16L16 4M6 5v4h3M10 13h2M13 13h3" /></svg>
                </StatusButton>
                <StatusButton aria-label="Grid" $framed>
                    <svg width="17" height="17" fill="none" stroke="#000"><path d="M.5.5h16v16H.5zM6 2.500h8v12H3V6zM8.500 2v13M3 8.500h12" /></svg>
                </StatusButton>
                <XyLabel htmlFor="xy">X Y :</XyLabel>
                <XyField><Field id="xy" $bg={cream} $edge={creamEdge} /></XyField>
                <StatusButton aria-label="Alert" $framed>
                    <svg width="17" height="17" fill="none" stroke="#000"><path d="M.5.5h16v16H.5z" /><path d="M8.500 3v7M8.500 12v2" strokeWidth="2" /></svg>
                </StatusButton>
                <Message>&lt;M1&gt; - Select first corner</Message>
                <UnitCell><Dropdown label="Unit" options={['MM']} mark={tealUp} $bg={teal} $edge={tealUp} /></UnitCell>
            </StatusBar>
            <PromptBar><div /></PromptBar>
            <Taskbar>
                <StartOrb aria-label="Start" />
                {Array.from({ length: 13 }, (_, i) => <Task key={i} $lit={i > 3 && i < 8} />)}
            </Taskbar>
            <DrillToolManager />
        </Screen>
    )
}
